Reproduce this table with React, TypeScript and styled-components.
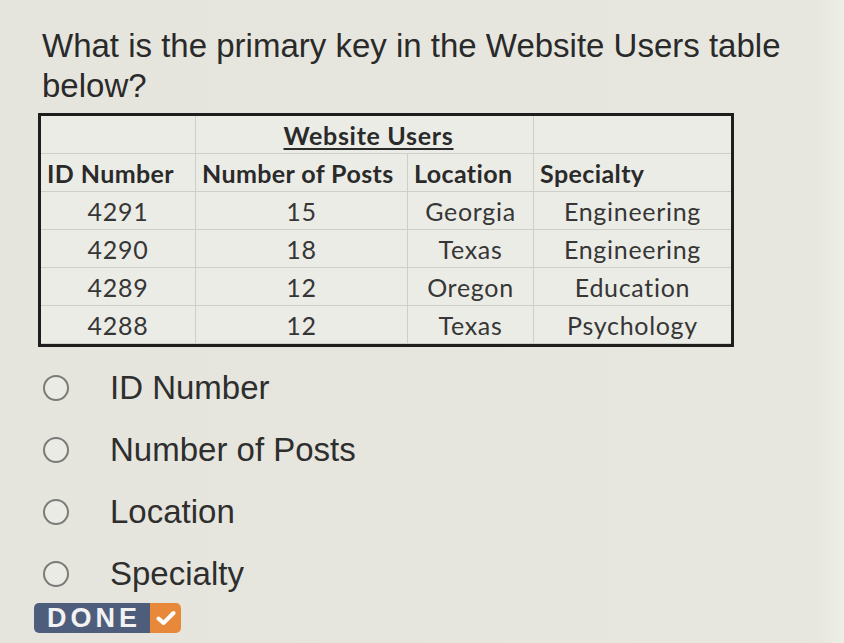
import React from "react";
import styled, { createGlobalStyle } from "styled-components";

const Global = createGlobalStyle`
  html, body {
    margin: 0;
    padding: 0;
    width: 844px;
    height: 643px;
    overflow: hidden;
    background: linear-gradient(to right, #e5e5dd 0%, #e7e7e0 97%, #eeeee8 100%);
  }
`;

const Page = styled.div`
  width: 844px;
  height: 643px;
  box-sizing: border-box;
  padding: 26px 0 0 38px;
  display: flex;
  flex-direction: column;
`;

const Question = styled.h1`
  margin: 0 0 7px 4px;
  font-family: "Liberation Sans", Arial, sans-serif;
  font-weight: 400;
  font-size: 33px;
  line-height: 40px;
  color: #2a2a2a;
  width: 790px;
`;

const Table = styled.div`
  width: 696px;
  box-sizing: border-box;
  border: 3px solid #1e1e1e;
  background: #ecece7;
  display: grid;
  grid-template-columns: 155px 212px 126px 1fr;
  font-family: Lato, "Open Sans", sans-serif;
  color: #383838;
`;

const Cell = styled.div<{ $head?: boolean; $span?: number; $last?: boolean }>`
  height: 38px;
  box-sizing: border-box;
  display: flex;
  align-items: center;
  justify-content: ${(p) => (p.$head ? "flex-start" : "center")};
  padding: ${(p) => (p.$head ? "0 0 0 6px" : "0")};
  font-size: 25px;
  letter-spacing: ${(p) => (p.$head ? "0.4px" : "0.7px")};
  font-weight: ${(p) => (p.$head ? 700 : 400)};
  color: ${(p) => (p.$head ? "#2a2a2a" : "#363636")};
  white-space: nowrap;
  border-right: ${(p) => (p.$last ? "none" : "1px solid #cfcfca")};
  border-bottom: 1px solid #cfcfca;
  grid-column: span ${(p) => p.$span ?? 1};
`;

const Title = styled(Cell)`
  justify-content: center;
  padding: 0 0 0 8px;
  font-weight: 700;
  letter-spacing: 0.7px;
  color: #2a2a2a;
  & > span {
    text-decoration: underline;
    text-decoration-thickness: 2px;
    text-underline-offset: 3px;
  }
`;

const Options = styled.div`
  margin: 12px 0 0 5px;
  display: flex;
  flex-direction: column;
  gap: 4px;
`;

const Option = styled.label`
  height: 58px;
  display: flex;
  align-items: center;
  gap: 41px;
  font-family: "Liberation Sans", Arial, sans-serif;
  font-size: 33px;
  color: #2e2e2e;
`;

const Radio = styled.span`
  width: 26px;
  height: 26px;
  box-sizing: border-box;
  border-radius: 50%;
  border: 2px solid #7b7b78;
  background: #ebebe6;
  flex: none;
`;

const Done = styled.button`
  margin: 0 0 0 -4px;
  align-self: flex-start;
  display: flex;
  height: 30px;
  padding: 0;
  border: none;
  border-radius: 5px;
  overflow: hidden;
  cursor: pointer;
`;

const DoneLabel = styled.span`
  width: 116px;
  display: flex;
  align-items: center;
  justify-content: center;
  background: #4f5d7c;
  color: #f2f2f2;
  font-family: "Liberation Sans", Arial, sans-serif;
  font-weight: 700;
  font-size: 27px;
  letter-spacing: 4px;
  padding-left: 4px;
  box-sizing: border-box;
`;

const DoneCheck = styled.span`
  width: 31px;
  display: flex;
  align-items: center;
  justify-content: center;
  background: #e7883a;
`;

const rows = [
  ["4291", "15", "Georgia", "Engineering"],
  ["4290", "18", "Texas", "Engineering"],
  ["4289", "12", "Oregon", "Education"],
  ["4288", "12", "Texas", "Psychology"],
];

const heads = ["ID Number", "Number of Posts", "Location", "Specialty"];
const options = ["ID Number", "Number of Posts", "Location", "Specialty"];

export default function App() {
  return (
    <>
      <Global />
      <Page>
        <Question>What is the primary key in the Website Users table below?</Question>
        <Table>
          <Cell />
          <Title $span={2}>
            <span>Website Users</span>
          </Title>
          <Cell $last />
          {heads.map((h, i) => (
            <Cell key={h} $head $last={i === 3}>
              {h}
            </Cell>
          ))}
          {rows.map((r, ri) =>
            r.map((c, ci) => (
              <Cell key={`${ri}-${ci}`} $last={ci === 3}>
                {c}
              </Cell>
            ))
          )}
        </Table>
        <Options>
          {options.map((o) => (
            <Option key={o}>
              <Radio />
              {o}
            </Option>
          ))}
        </Options>
        <Done>
          <DoneLabel>DONE</DoneLabel>
          <DoneCheck>
            <svg width="20" height="16" viewBox="0 0 20 16">
              <path d="M2.5 8.5 L7.5 13 L17.5 3" fill="none" stroke="#fff" strokeWidth="4" strokeLinecap="round" strokeLinejoin="round" />
            </svg>
          </DoneCheck>
        </Done>
      </Page>
    </>
  );
}
